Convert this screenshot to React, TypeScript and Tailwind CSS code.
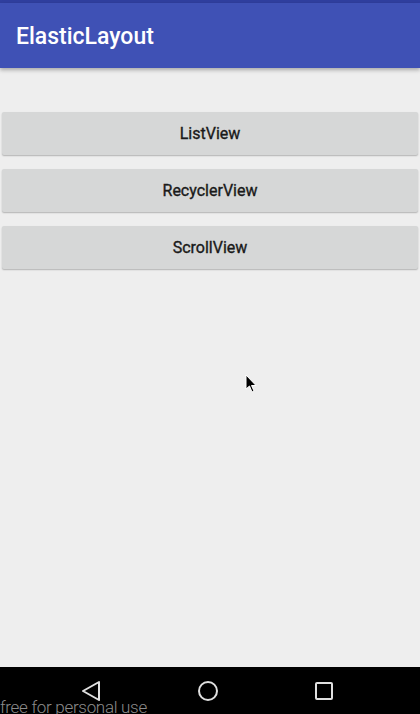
export default function App() {
  const items = ["ListView", "RecyclerView", "ScrollView"];

  return (
    <div className="relative flex h-[714px] w-[420px] flex-col overflow-hidden bg-[#eeeeee] font-['Roboto',sans-serif]">
      <div className="h-[3px] bg-[#303f9f]" />
      <div className="relative z-10 flex h-[65px] items-center bg-[#3f51b5] px-4 pt-[3px] shadow-[0_2px_4px_rgba(0,0,0,0.3)]">
        <span className="text-[23px] font-medium text-white">ElasticLayout</span>
      </div>

      <div className="flex flex-1 flex-col gap-[14px] px-[2px] pt-[44px]">
        {items.map((label) => (
          <button
            key={label}
            className="flex h-[43px] items-center justify-center rounded-[2px] bg-[#d6d7d7] text-[16px] font-normal text-[#1a1a1a] [-webkit-text-stroke:0.35px_#1a1a1a] shadow-[0_1px_1.5px_rgba(0,0,0,0.25)]"
          >
            {label}
          </button>
        ))}
      </div>

      <div className="relative flex h-[47px] items-center gap-[95px] bg-black pl-[80px]">
        <svg width="22" height="22" viewBox="0 0 22 22">
          <path d="M19 2 L3 11 L19 20 Z" fill="none" stroke="#e0e0e0" strokeWidth="2" strokeLinejoin="round" />
        </svg>
        <svg width="22" height="22" viewBox="0 0 22 22">
          <circle cx="11" cy="11" r="9" fill="none" stroke="#e0e0e0" strokeWidth="2" />
        </svg>
        <svg width="20" height="20" viewBox="0 0 20 20">
          <rect x="2" y="2" width="16" height="16" rx="1" fill="none" stroke="#e0e0e0" strokeWidth="2" />
        </svg>
        <span className="absolute bottom-[-6px] left-0 text-[17px] font-light tracking-[-0.3px] text-[#8a8a8a]">free for personal use</span>
      </div>

      <svg width="14" height="20" viewBox="0 0 14 20" className="absolute left-[245px] top-[374px]">
        <path d="M1 1 L1 15 L4.5 12 L7 18 L9 17 L6.5 11.5 L11 11.5 Z" fill="#000" stroke="#fff" strokeWidth="1" />
      </svg>
    </div>
  );
}
